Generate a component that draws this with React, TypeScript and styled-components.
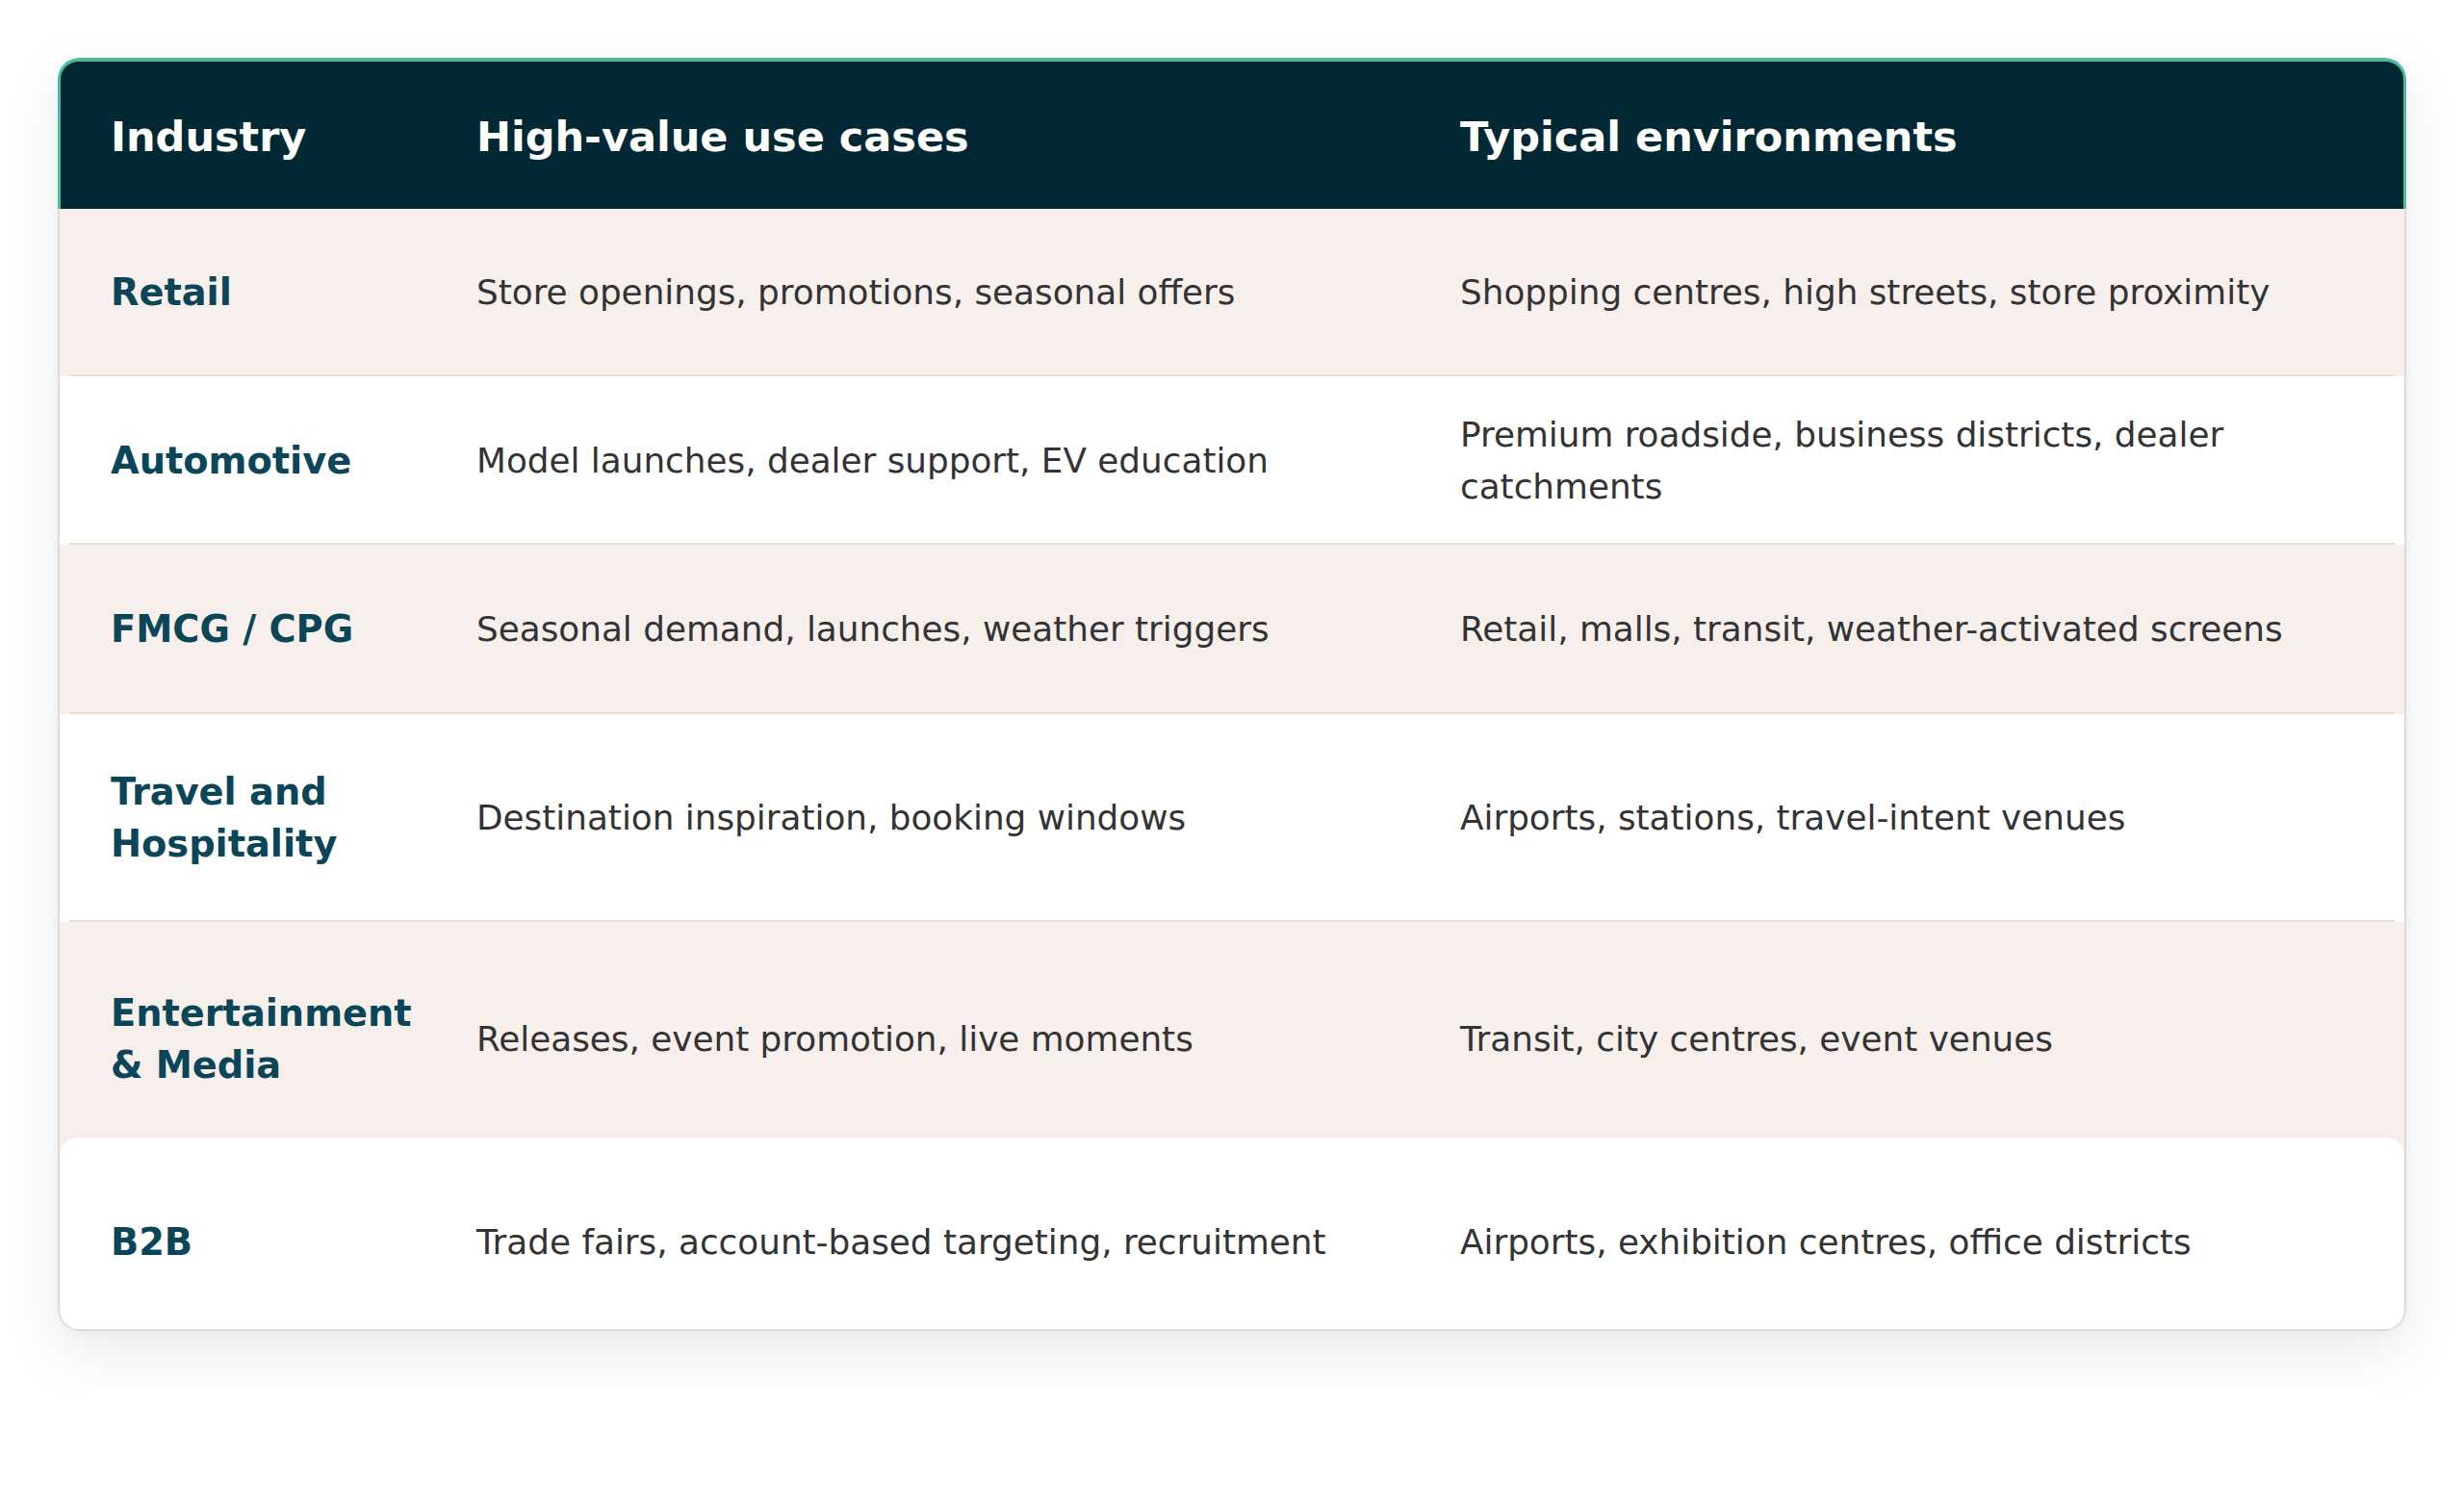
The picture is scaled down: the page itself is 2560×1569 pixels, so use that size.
import React from 'react'
import styled, { createGlobalStyle } from 'styled-components'

const COLOR_NAVY = '#022834'
const COLOR_TEAL = '#4dbb9b'
const COLOR_BLUSH = '#f7efec'
const COLOR_LINE = '#e6ddd7'
const COLOR_EDGE = '#e2d9d2'
const COLOR_INK = '#333333'
const COLOR_LABEL = '#0a4558'

type Row = {
  industry: string
  useCases: string
  environments: string
  height: number
  offset?: number
}

const rows: Row[] = [
  {
    industry: 'Retail',
    useCases: 'Store openings, promotions, seasonal offers',
    environments: 'Shopping centres, high streets, store proximity',
    height: 174,
  },
  {
    industry: 'Automotive',
    useCases: 'Model launches, dealer support, EV education',
    environments: 'Premium roadside, business districts, dealer catchments',
    height: 175,
  },
  {
    industry: 'FMCG / CPG',
    useCases: 'Seasonal demand, launches, weather triggers',
    environments: 'Retail, malls, transit, weather-activated screens',
    height: 176,
  },
  {
    industry: 'Travel and Hospitality',
    useCases: 'Destination inspiration, booking windows',
    environments: 'Airports, stations, travel-intent venues',
    height: 216,
  },
  {
    industry: 'Entertainment & Media',
    useCases: 'Releases, event promotion, live moments',
    environments: 'Transit, city centres, event venues',
    height: 224,
    offset: 20,
  },
  {
    industry: 'B2B',
    useCases: 'Trade fairs, account-based targeting, recruitment',
    environments: 'Airports, exhibition centres, office districts',
    height: 199,
    offset: 18,
  },
]

const GlobalStyle = createGlobalStyle`
  html, body {
    margin: 0;
    padding: 0;
    background: #ffffff;
  }
  body {
    font-family: "DejaVu Sans", "Noto Sans", sans-serif;
    -webkit-font-smoothing: antialiased;
  }
`

export default function App() {
  return (
    <>
      <GlobalStyle />
      <Page>
        <Card>
          <HeaderRow>
            <HeadCell>Industry</HeadCell>
            <HeadCell>High-value use cases</HeadCell>
            <HeadCell>Typical environments</HeadCell>
          </HeaderRow>
          <Body>
            {rows.map((row, i) => {
              const isLast = i === rows.length - 1
              const ruled = i < rows.length - 2
              return (
                <BodyRow
                  key={row.industry}
                  $height={row.height}
                  $offset={row.offset ?? 0}
                  $tinted={i % 2 === 0}
                  $ruled={ruled}
                  $last={isLast}
                >
                  <IndustryCell>{row.industry}</IndustryCell>
                  <TextCell>{row.useCases}</TextCell>
                  <TextCell>{row.environments}</TextCell>
                </BodyRow>
              )
            })}
          </Body>
        </Card>
      </Page>
    </>
  )
}

const Page = styled.div`
  padding: 60px;
`

const Card = styled.div`
  border-radius: 22px;
  overflow: hidden;
  box-shadow: 0 22px 60px rgba(24, 32, 40, 0.09), 0 2px 10px rgba(24, 32, 40, 0.04);
`

const columns = `
  display: grid;
  grid-template-columns: 330px 972px 1fr;
  column-gap: 50px;
  align-items: center;
`

const HeaderRow = styled.div`
  ${columns}
  box-sizing: border-box;
  height: 157px;
  padding: 5px 52px 0;
  background: ${COLOR_NAVY};
  border: 3px solid ${COLOR_TEAL};
  border-top-width: 4px;
  border-bottom: 0;
  border-radius: 22px 22px 0 0;
`

const HeadCell = styled.div`
  color: #ffffff;
  font-size: 43px;
  font-weight: 700;
  line-height: 1.3;
`

const Body = styled.div`
  background: ${COLOR_BLUSH};
  border: 2px solid ${COLOR_EDGE};
  border-top: 0;
  border-radius: 0 0 22px 22px;
  overflow: hidden;
`

const BodyRow = styled.div<{
  $height: number
  $offset: number
  $tinted: boolean
  $ruled: boolean
  $last: boolean
}>`
  ${columns}
  box-sizing: border-box;
  min-height: ${(p) => p.$height}px;
  padding: ${(p) => p.$offset}px 53px 0;
  background: ${(p) => {
    const fill = p.$tinted ? COLOR_BLUSH : '#ffffff'
    return p.$ruled
      ? `linear-gradient(${COLOR_LINE}, ${COLOR_LINE}) bottom center / calc(100% - 20px) 2px no-repeat, ${fill}`
      : fill
  }};
  border-radius: ${(p) => (p.$last ? '20px' : '0')};
`

const IndustryCell = styled.div`
  color: ${COLOR_LABEL};
  font-size: 38.3px;
  font-weight: 700;
  line-height: 1.4;
`

const TextCell = styled.div`
  color: ${COLOR_INK};
  font-size: 35.8px;
  line-height: 1.5;
`
